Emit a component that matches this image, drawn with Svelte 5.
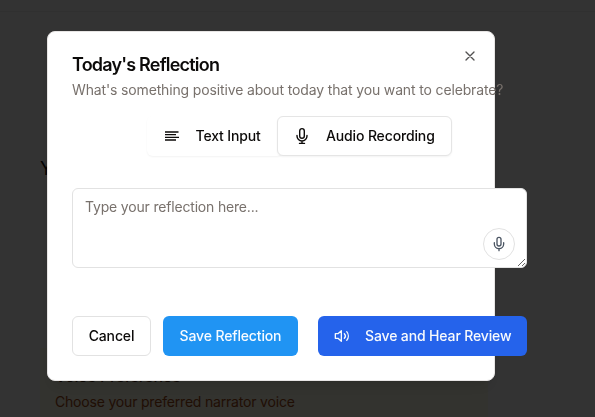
<script>
  let reflection = $state('');
</script>

{#snippet mic(size)}
  <svg width={size} height={size} viewBox="0 0 24 24" fill="none" stroke="currentColor" stroke-width="2" stroke-linecap="round" stroke-linejoin="round" aria-hidden="true">
    <path d="M12 2a3 3 0 0 0-3 3v7a3 3 0 0 0 6 0V5a3 3 0 0 0-3-3Z" />
    <path d="M19 10v2a7 7 0 0 1-14 0v-2" />
    <path d="M12 19v3" />
  </svg>
{/snippet}

<div class="page">
  <header></header>
  <main>
    <h1>Your Settings</h1>
    <section class="voice">
      <h3>Voice Preference</h3>
      <p>Choose your preferred narrator voice</p>
    </section>
  </main>
</div>

<div class="overlay">
  <div class="dialog" role="dialog" aria-labelledby="title">
    <button class="close" aria-label="Close">
      <svg width="16" height="16" viewBox="0 0 24 24" fill="none" stroke="currentColor" stroke-width="2" stroke-linecap="round"><path d="M18 6 6 18M6 6l12 12" /></svg>
    </button>
    <h2 id="title">Today's Reflection</h2>
    <p class="desc">What's something positive about today that you want to celebrate?</p>

    <div class="tabs">
      <button class="tab">
        <svg width="16" height="16" viewBox="0 0 16 16" fill="none" stroke="currentColor" stroke-width="1.35" aria-hidden="true"><path d="M1 4h13.500M1 6.600h11M1 9.300h14M1 12h11" /></svg>
        <span>Text Input</span>
      </button>
      <button class="tab outlined">
        <svg width="18" height="18" viewBox="0 0 18 18" fill="none" stroke="currentColor" stroke-width="1.400" stroke-linecap="round" aria-hidden="true">
          <rect x="6.700" y="1.600" width="4.600" height="9.600" rx="2.300" />
          <path d="M4 8.500v.5a5 5 0 0 0 10 0v-.5M9 14v2.400M6.500 16.400h5" />
        </svg>
        <span>Audio Recording</span>
      </button>
    </div>

    <div class="field">
      <textarea bind:value={reflection} placeholder="Type your reflection here..."></textarea>
      <button class="record" aria-label="Record">{@render mic(16)}</button>
    </div>

    <div class="actions">
      <button class="btn cancel">Cancel</button>
      <button class="btn save">Save Reflection</button>
      <button class="btn review">
        <svg width="16" height="16" viewBox="0 0 24 24" fill="none" stroke="currentColor" stroke-width="2" stroke-linecap="round" stroke-linejoin="round" aria-hidden="true">
          <path d="M11 4 6 8.500H2v7h4l5 4.500Z" />
          <path d="M15.500 8.500a5 5 0 0 1 0 7M19.100 5.500a10 10 0 0 1 0 13" />
        </svg>
        <span>Save and Hear Review</span>
      </button>
    </div>
  </div>
</div>

<style>
  :global(body) {
    overflow: hidden;
    font-family: Inter, "Liberation Sans", sans-serif;
    font-size: 14px;
    line-height: 20px;
  }
  h1, h2, h3, p { margin: 0; }
  button {
    font: inherit;
    font-weight: 500;
    letter-spacing: -0.14px;
    color: #0c0a09;
    padding: 0;
    border: 0;
    background: none;
    white-space: nowrap;
  }
  svg { display: block; flex: none; }
  .page { height: 417px; overflow: hidden; background: #fff; }
  header { height: 11px; border-bottom: 1px solid #f0f0f0; }
  main { padding: 143px 107px 0 40px; }
  h1 { font-size: 18px; line-height: 28px; font-weight: 400; color: #0c0a09; }
  .voice { margin-top: 165px; height: 100px; padding: 16px 15px; background: #fefce8; }
  .voice h3 { font-size: 16px; line-height: 24px; font-weight: 500; letter-spacing: -0.35px; color: #422006; }
  .voice p { margin-top: 4px; letter-spacing: -0.19px; color: #a14a16; }
  .overlay {
    position: fixed;
    inset: 0;
    background: rgba(0, 0, 0, 0.8);
    padding: 31px 0 0 47px;
  }
  .dialog {
    position: relative;
    box-sizing: border-box;
    width: 448px;
    height: 350px;
    padding: 24px;
    border: 1px solid #e7e5e4;
    border-radius: 8px;
    background: #fff;
    box-shadow: 0 10px 15px -3px rgba(0, 0, 0, 0.1), 0 4px 6px -4px rgba(0, 0, 0, 0.1);
  }
  .close { position: absolute; top: 16px; right: 16px; color: #0c0a09; opacity: 0.7; }
  h2 { font-size: 18px; line-height: 18px; font-weight: 600; letter-spacing: -0.8px; color: #0c0a09; }
  .desc { margin-top: 6px; white-space: nowrap; letter-spacing: -0.145px; color: #78716c; }
  .tabs { width: 455px; height: 40px; margin-top: 16px; display: flex; justify-content: center; }
  .tab {
    display: flex;
    align-items: center;
    height: 40px;
    box-sizing: border-box;
    border-radius: 6px;
    border: 1px solid transparent;
  }
  .tab:first-child {
    width: 136px;
    margin-right: -6px;
    padding-left: 16px;
    gap: 15.5px;
    box-shadow: 0 1px 2px rgba(0, 0, 0, 0.05);
  }
  .outlined {
    width: 175px;
    padding-left: 15px;
    gap: 15px;
    border-color: #e5e5e5;
    background: #fff;
    box-shadow: 0 1px 2px rgba(0, 0, 0, 0.05);
    z-index: 1;
  }
  .field { position: relative; width: 455px; height: 80px; margin-top: 32px; }
  textarea {
    display: block;
    box-sizing: border-box;
    width: 455px;
    height: 80px;
    padding: 8px 12px;
    border: 1px solid #e2e2e2;
    border-radius: 6px;
    background: #fff;
    font: inherit;
    letter-spacing: -0.18px;
    resize: vertical;
  }
  textarea::placeholder { color: #78716c; opacity: 1; }
  .record {
    position: absolute;
    right: 12px;
    bottom: 8px;
    width: 32px;
    height: 32px;
    display: grid;
    place-items: center;
    border: 1px solid #e2e2e2;
    border-radius: 50%;
    background: #fff;
    color: #4b5563;
  }
  .actions { display: flex; width: 455px; margin-top: 48px; }
  .btn {
    box-sizing: border-box;
    height: 40px;
    display: flex;
    align-items: center;
    justify-content: center;
    border-radius: 6px;
    flex: none;
  }
  .cancel { width: 79px; border: 1px solid #e2e2e2; }
  .save { width: 135px; margin-left: 12px; background: #2094f3; color: #f7fbff; }
  .review { width: 209px; margin-left: 20px; gap: 15.5px; background: #2563eb; color: #f8fafc; }
</style>
